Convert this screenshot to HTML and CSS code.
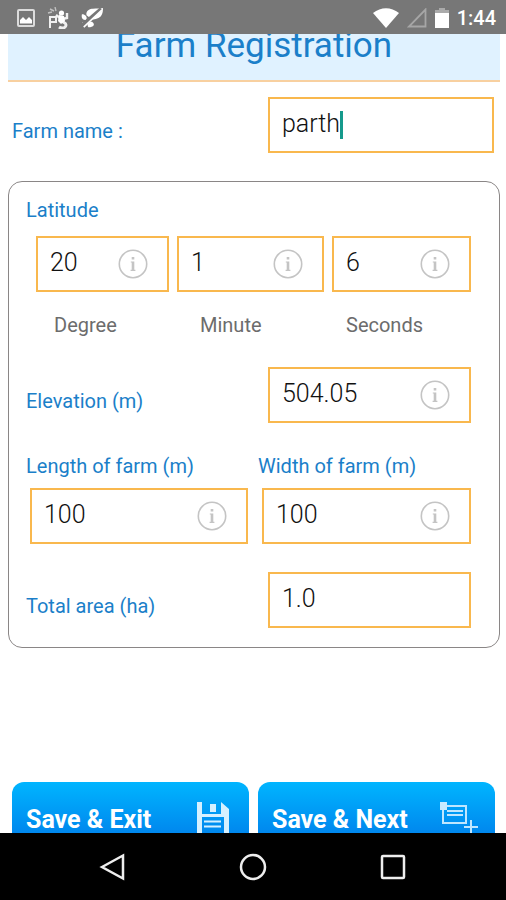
FILE: index.html
```html
<!DOCTYPE html>
<html lang="en">
<head>
<meta charset="utf-8">
<meta name="viewport" content="width=device-width, initial-scale=1">
<title>Farm Registration</title>
<link rel="stylesheet" href="styles.css">
</head>
<body>
<svg class="defs" aria-hidden="true">
  <symbol id="info" viewBox="0 0 30 30">
    <circle cx="15" cy="15" r="13.7" fill="none" stroke="currentColor" stroke-width="1.6"/>
    <path d="M13.700 8h2.600v2.400h-2.600zM12.800 12.400h3.500v8.600h-2.600v-7.400h-.9zM12.600 20.800h4.800v1.300h-4.800z" fill="currentColor"/>
  </symbol>
</svg>

<header class="status-bar">
  <div class="status-group">
    <svg class="notice" viewBox="0 0 18 18" aria-hidden="true">
      <rect x="1" y="1" width="16" height="16" rx="1" fill="none" stroke="#dcdcdc" stroke-width="2"/>
      <path d="M3 14.500V11l3-3 3 3 3-3 3 3v3.500z" fill="#fff"/>
    </svg>
    <svg class="notice wide" viewBox="0 0 22 22" aria-hidden="true">
      <g fill="none" stroke="#f0f0f0" stroke-width="2">
        <path d="M3 21V10h6v5H3"/>
        <path d="M9 8l4 3M20 6v5l-5 1" stroke-width="2.400"/>
        <path d="M12 20c3 2 7 1 7-2s-4-2-5-5" stroke-width="3"/>
      </g>
      <path d="M12 8l5 1 1 5-4 3-3-3z" fill="#fff"/>
      <circle cx="14.500" cy="6" r="2.600" fill="#fff"/>
      <path d="M1 6l4-1M3 2l4 2M8 0l1 4" fill="none" stroke="#c0c0c0" stroke-width="1.400"/>
    </svg>
    <svg class="notice wide" viewBox="0 0 24 22" aria-hidden="true">
      <path d="M6 8C5 3 10 1 13 1c4-1 7 0 11-1 0 5-1 9-5 11-4 2-7 2-9 0z" fill="#fff"/>
      <path d="M1 7c4 0 6 3 5 6-4 1-6-2-5-6zM8 21c-2-3 0-6 4-6 4 3 2 6-4 6zM1 16l4-1-1 4z" fill="#fff"/>
      <path d="M1 19L22 1" stroke="#777" stroke-width="4"/>
      <path d="M3 21L23 2" stroke="#fff" stroke-width="1.800"/>
    </svg>
  </div>
  <div class="status-group right">
    <svg class="wifi" viewBox="0 0 26 20" aria-hidden="true"><path d="M0 5C8-1.500 18-1.500 26 5L13 20z" fill="#fff"/></svg>
    <svg class="signal" viewBox="0 0 20 20" aria-hidden="true"><path d="M2 18.500H18.500V1.500z" fill="none" stroke="#a6a6a6" stroke-width="1.800"/></svg>
    <svg class="battery" viewBox="0 0 14 20" aria-hidden="true"><path d="M4 0h6v2h4v3H0V2h4z" fill="#aaa"/><path d="M0 5h14v15H0z" fill="#fff"/></svg>
    <time class="clock">1:44</time>
  </div>
</header>

<main class="screen">
  <h1 class="title">Farm Registration</h1>
  <form class="form">
    <div class="row name-row">
      <label class="label" for="name">Farm name :</label>
      <div class="field"><input id="name" type="text" value="parth"><span class="caret"></span></div>
    </div>

    <section class="card">
      <fieldset class="latitude">
        <legend class="label">Latitude</legend>
        <div class="coords">
          <div class="field"><input id="deg" type="text" value="20"><svg class="info"><use href="#info"/></svg></div>
          <div class="field"><input id="min" type="text" value="1"><svg class="info"><use href="#info"/></svg></div>
          <div class="field"><input id="sec" type="text" value="6"><svg class="info"><use href="#info"/></svg></div>
        </div>
        <div class="units">
          <label for="deg">Degree</label>
          <label for="min">Minute</label>
          <label for="sec">Seconds</label>
        </div>
      </fieldset>

      <div class="row elevation">
        <label class="label" for="elev">Elevation (m)</label>
        <div class="field"><input id="elev" type="text" value="504.05"><svg class="info"><use href="#info"/></svg></div>
      </div>

      <div class="sizes">
        <div class="size">
          <label class="label" for="len">Length of farm (m)</label>
          <div class="field"><input id="len" type="text" value="100"><svg class="info"><use href="#info"/></svg></div>
        </div>
        <div class="size">
          <label class="label" for="wid">Width of farm (m)</label>
          <div class="field"><input id="wid" type="text" value="100"><svg class="info"><use href="#info"/></svg></div>
        </div>
      </div>

      <div class="row">
        <label class="label" for="area">Total area (ha)</label>
        <div class="field"><input id="area" type="text" value="1.0"></div>
      </div>
    </section>

    <div class="actions">
      <button class="action" type="button">
        <span>Save &amp; Exit</span>
        <svg class="action-icon" viewBox="0 0 38 36" aria-hidden="true">
          <path fill-rule="evenodd" d="M3 1h5v12h19V1l8 7v27H3zM8 16v16h22V16z" fill="#d5f0ff"/>
          <path d="M16 3h6v8h-6z" fill="#d5f0ff"/>
          <path d="M10 20.500h17M10 25.500h17" stroke="#d5f0ff" stroke-width="2"/>
        </svg>
      </button>
      <button class="action" type="button">
        <span>Save &amp; Next</span>
        <svg class="action-icon" viewBox="0 0 38 36" aria-hidden="true">
          <g fill="none" stroke="#bfe6ff" stroke-width="2">
            <path d="M3 5h23v17H3z"/>
            <path d="M7 10h16M7 14h16M31 19v14M24 26h14"/>
          </g>
          <path d="M0 1h7v8H0z" fill="#c9ebff"/>
        </svg>
      </button>
    </div>
  </form>
</main>

<nav class="nav-bar" aria-label="System">
  <button type="button" aria-label="Back"><svg viewBox="0 0 28 28"><path d="M3 14L24 2.500V25.500z"/></svg></button>
  <button type="button" aria-label="Home"><svg viewBox="0 0 28 28"><circle cx="14" cy="14" r="12"/></svg></button>
  <button type="button" aria-label="Recent apps"><svg viewBox="0 0 28 28"><rect x="3" y="3" width="22" height="22" rx="1"/></svg></button>
</nav>
</body>
</html>
```
FILE: styles.css
```css
* {
  box-sizing: border-box;
}

body {
  margin: 0;
  height: 100vh;
  display: flex;
  flex-direction: column;
  background: #fff;
  font-family: Roboto, "Liberation Sans", sans-serif;
}

.defs {
  display: none;
}

/* Status bar */
.status-bar {
  flex: none;
  display: flex;
  justify-content: space-between;
  align-items: center;
  height: 34px;
  padding: 2px 10px 0 17px;
  background: #777;
}

.status-group {
  display: flex;
  align-items: center;
  gap: 12px;
}

.status-group.right {
  gap: 8px;
}

.notice {
  width: 18px;
  height: 18px;
}

.notice.wide {
  width: 22px;
  height: 22px;
}

.wifi {
  width: 26px;
  height: 20px;
}

.signal {
  width: 20px;
  height: 20px;
}

.battery {
  width: 14px;
  height: 20px;
}

.clock {
  color: #fff;
  font-size: 20px;
  font-weight: 500;
}

/* Scrolled page content */
.screen {
  flex: 1;
  min-height: 0;
  padding: 0 6px 0 8px;
  overflow-y: auto;
  scrollbar-width: none;
}

.title {
  margin: -24px 0 0;
  height: 72px;
  border-bottom: 2px solid #f8d0a0;
  background: #e0f2ff;
  color: #1b7fc9;
  font-size: 35px;
  font-weight: 400;
  line-height: 72px;
  text-align: center;
}

.row {
  display: grid;
  grid-template-columns: 242fr 203fr;
  align-items: end;
}

.row .label {
  margin-bottom: 10px;
}

.name-row {
  grid-template-columns: 256fr 226fr;
  margin: 15px 6px 28px 4px;
}

.label {
  padding: 0;
  color: #1b7fc9;
  font-size: 20px;
  line-height: 24px;
}

.field {
  position: relative;
  display: flex;
}

.field input {
  width: 100%;
  min-width: 0;
  height: 56px;
  padding: 0 12px 3px;
  border: 2px solid #f9b84e;
  border-radius: 0;
  outline: none;
  background: #fff;
  color: #111;
  font-family: inherit;
  font-size: 25px;
  font-weight: 300;
}

.info {
  position: absolute;
  top: 13px;
  right: 21px;
  width: 30px;
  height: 30px;
  color: #c4c4c4;
}

.caret {
  position: absolute;
  top: 14px;
  left: 72px;
  width: 3px;
  height: 28px;
  background: #159a8c;
}

.card {
  padding: 16px 28px 19px 17px;
  border: 1px solid #8a8686;
  border-radius: 14px;
}

.latitude {
  margin: 0;
  padding: 0;
  border: 0;
}

.coords {
  display: grid;
  grid-template-columns: 133fr 147fr 139fr;
  gap: 8px;
  margin: 14px 0 21px 10px;
}

.units {
  display: grid;
  grid-template-columns: repeat(3, 1fr);
  margin: 0 -21px 0 28px;
  color: #6c6c6c;
  font-size: 20px;
  line-height: 24px;
}

.elevation {
  margin: 30px 0 31px;
}

.sizes {
  display: grid;
  grid-template-columns: 222fr 213fr;
  gap: 10px;
  margin-bottom: 28px;
}

.size .field {
  margin: 10px 0 0 4px;
}

/* Actions */
.actions {
  display: grid;
  grid-template-columns: 1fr 1fr;
  gap: 9px;
  margin: 134px 5px 20px 4px;
}

.action {
  display: flex;
  justify-content: space-between;
  align-items: center;
  height: 74px;
  padding: 0 17px 0 14px;
  border: 0;
  border-radius: 12px;
  background: linear-gradient(#00b5ff, #0073e6);
  color: #fff;
  font-family: inherit;
  font-size: 25px;
  font-weight: 700;
}

.action-icon {
  width: 38px;
  height: 36px;
}

/* Navigation bar */
.nav-bar {
  flex: none;
  display: flex;
  justify-content: center;
  align-items: center;
  gap: 112px;
  height: 67px;
  background: #000;
}

.nav-bar button {
  display: flex;
  padding: 0;
  border: 0;
  background: none;
}

.nav-bar svg {
  width: 28px;
  height: 28px;
  fill: none;
  stroke: #eee;
  stroke-width: 2.5;
}
```
